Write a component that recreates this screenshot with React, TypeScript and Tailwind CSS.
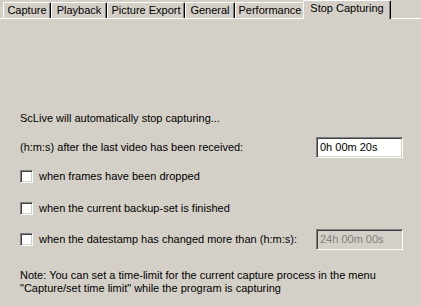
const tabs = [
  { label: "Capture", w: "w-[48px]" },
  { label: "Playback", w: "w-[56px]" },
  { label: "Picture Export", w: "w-[78px]" },
  { label: "General", w: "w-[50px]" },
  { label: "Performance", w: "w-[70px]" },
];

function Checkbox() {
  return (
    <span className="w-[13px] h-[13px] shrink-0 bg-white border border-t-[#808080] border-l-[#808080] border-b-white border-r-white shadow-[inset_1px_1px_#404040,inset_-1px_-1px_#d4d0c8]" />
  );
}

function TimeBox({ value, disabled }: { value: string; disabled?: boolean }) {
  return (
    <div
      className={`ml-auto w-[87px] h-[21px] flex items-center pl-[3px] border border-t-[#808080] border-l-[#808080] border-b-white border-r-white shadow-[inset_1px_1px_#404040,inset_-1px_-1px_#d4d0c8] ${
        disabled ? "bg-[#d4d0c8] text-[#808080]" : "bg-white text-black"
      }`}
    >
      {value}
    </div>
  );
}

export default function App() {
  return (
    <div
      className="w-[421px] h-[306px] overflow-hidden bg-[#d4d0c8] text-black text-[11px] leading-[13px]"
      style={{ fontFamily: '"Liberation Sans", Arial, sans-serif' }}
    >
      {/* Tab strip */}
      <div className="h-[18px] flex items-end pl-[3px]">
        {tabs.map((t) => (
          <div
            key={t.label}
            className={`${t.w} h-[16px] flex items-center justify-center border-t border-l border-white border-r border-r-black shadow-[inset_-1px_0_#808080] rounded-t-[2px]`}
          >
            {t.label}
          </div>
        ))}
        <div className="relative z-10 -ml-[2px] w-[88px] h-[19px] -mb-[1px] pb-[3px] flex items-center justify-center bg-[#d4d0c8] border-t border-l border-white border-r border-r-black shadow-[inset_-1px_0_#808080] rounded-t-[2px]">
          Stop Capturing
        </div>
      </div>

      {/* Page */}
      <div className="border-t border-white h-full pl-[20px] pr-[18px] pt-[93px]">
        <p>ScLive will automatically stop capturing...</p>

        <div className="mt-[12px] h-[21px] flex items-center">
          <span>(h:m:s) after the last video has been received:</span>
          <TimeBox value="0h 00m 20s" />
        </div>

        <label className="mt-[12px] h-[13px] flex items-center gap-[6px]">
          <Checkbox />
          <span>when frames have been dropped</span>
        </label>

        <label className="mt-[19px] h-[13px] flex items-center gap-[6px]">
          <Checkbox />
          <span>when the current backup-set is finished</span>
        </label>

        <div className="mt-[13px] h-[23px] flex items-center gap-[6px]">
          <Checkbox />
          <span>when the datestamp has changed more than (h:m:s):</span>
          <TimeBox value="24h 00m 00s" disabled />
        </div>

        <p className="mt-[18px]">
          Note: You can set a time-limit for the current capture process in the menu
          <br />
          "Capture/set time limit" while the program is capturing
        </p>
      </div>
    </div>
  );
}
